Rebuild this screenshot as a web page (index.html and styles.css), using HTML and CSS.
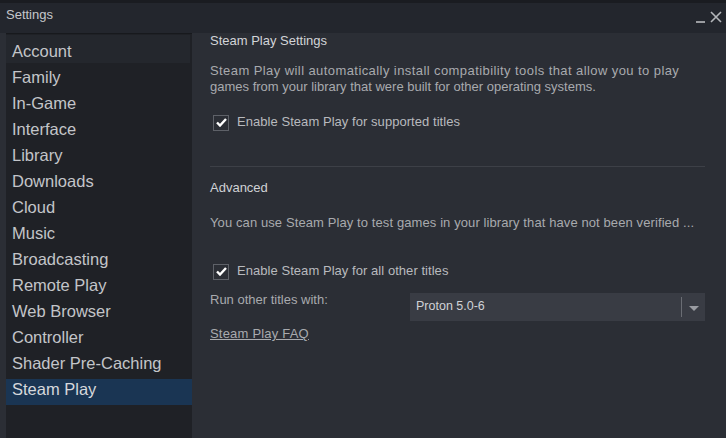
FILE: index.html
```html
<!DOCTYPE html>
<html>
<head>
<meta charset="utf-8">
<link rel="stylesheet" href="styles.css">
</head>
<body>
<div class="window">
  <div class="topstrip"></div>
  <div class="titlebar">
    <span class="title">Settings</span>
    <div class="controls">
      <span class="min"></span>
      <svg class="close" width="12" height="12" viewBox="0 0 12 12"><path d="M1 1 L11 11 M11 1 L1 11" stroke="#b4b6ba" stroke-width="1.6" fill="none"/></svg>
    </div>
  </div>
  <div class="main">
    <nav class="sidebar">
      <div class="item hover">Account</div>
      <div class="item">Family</div>
      <div class="item">In-Game</div>
      <div class="item">Interface</div>
      <div class="item">Library</div>
      <div class="item">Downloads</div>
      <div class="item">Cloud</div>
      <div class="item">Music</div>
      <div class="item">Broadcasting</div>
      <div class="item">Remote Play</div>
      <div class="item">Web Browser</div>
      <div class="item">Controller</div>
      <div class="item">Shader Pre-Caching</div>
      <div class="item active">Steam Play</div>
    </nav>
    <section class="content">
      <h2 class="heading">Steam Play Settings</h2>
      <p class="desc"><span class="wide">Steam Play will automatically install compatibility tools that allow you to play</span><br>games from your library that were built for other operating systems.</p>
      <label class="check first"><span class="box"><svg width="11" height="9" viewBox="0 0 11 9"><path d="M1 4.5 L4 7.5 L10 1" stroke="#ffffff" stroke-width="2.4" fill="none"/></svg></span>Enable Steam Play for supported titles</label>
      <div class="sep"></div>
      <h2 class="heading adv">Advanced</h2>
      <p class="desc one">You can use Steam Play to test games in your library that have not been verified ...</p>
      <label class="check second"><span class="box"><svg width="11" height="9" viewBox="0 0 11 9"><path d="M1 4.5 L4 7.5 L10 1" stroke="#ffffff" stroke-width="2.4" fill="none"/></svg></span>Enable Steam Play for all other titles</label>
      <div class="runrow">
        <span class="runlabel">Run other titles with:</span>
        <div class="select">
          <span class="value">Proton 5.0-6</span>
          <span class="divider"></span>
          <span class="arrow"></span>
        </div>
      </div>
      <a class="faq">Steam Play FAQ</a>
    </section>
  </div>
</div>
</body>
</html>
```
FILE: styles.css
```css
* { box-sizing: border-box; }
html, body { margin: 0; padding: 0; }
body {
  width: 726px;
  height: 438px;
  overflow: hidden;
  background: #2b2e35;
  font-family: "Liberation Sans", Arial, sans-serif;
}
.window {
  display: flex;
  flex-direction: column;
  height: 438px;
}
.topstrip {
  height: 3px;
  background: #1a1c21;
}
.titlebar {
  height: 30px;
  background: #23262d;
  display: flex;
  align-items: center;
  justify-content: space-between;
  padding: 0 4px 0 6px;
}
.title {
  color: #c5c7cb;
  font-size: 13px;
  margin-top: -8px;
}
.controls {
  display: flex;
  align-items: center;
  gap: 5px;
  margin-top: -2px;
}
.min {
  width: 9px;
  height: 2px;
  background: #9a9ca0;
  margin-top: 9px;
}
.main {
  flex: 1;
  display: flex;
  min-height: 0;
}
.sidebar {
  width: 186px;
  margin-left: 6px;
  background: #1f2126;
  padding-top: 7px;
  border-top: 1px solid #17191d;
}
.item {
  height: 26px;
  line-height: 20px;
  padding-left: 6px;
  font-size: 16.5px;
  color: #c3c5c9;
  margin-right: 2px;
}
.item.hover {
  background: #24272d;
  height: 28px;
  margin-top: -6px;
  padding-top: 6px;
  margin-bottom: 4px;
}
.item.active {
  background: #1a3553;
  color: #d6d8dc;
  margin-right: 0;
}
.content {
  flex: 1;
  padding: 0 21px 0 18px;
}
.heading {
  margin: 0;
  font-weight: normal;
  font-size: 13px;
  line-height: 16px;
  color: #d2d4d8;
}
.desc {
  margin: 14px 0 0;
  font-size: 13px;
  line-height: 16px;
  color: #a8aaae;
}
.wide { letter-spacing: 0.42px; }
.desc.one { margin-top: 19px; letter-spacing: 0.1px; }
.check {
  display: flex;
  align-items: center;
  font-size: 13px;
  color: #b8babe;
  height: 20px;
  letter-spacing: 0.05px;
}
.check.first { margin-top: 16px; }
.check.second { margin-top: 29px; }
.box {
  width: 16px;
  height: 16px;
  border: 1px solid #5e6168;
  margin: 3px 8px 0 3px;
  display: flex;
  align-items: center;
  justify-content: center;
}
.sep {
  height: 1px;
  background: #3d4047;
  margin-top: 35px;
}
.heading.adv {
  margin-top: 13px;
  color: #d0d2d6;
}
.runrow {
  display: flex;
  align-items: flex-start;
  margin-top: 13px;
}
.runlabel {
  width: 200px;
  font-size: 13px;
  color: #a8aaae;
  line-height: 16px;
  margin-top: -1px;
}
.select {
  flex: 1;
  height: 28px;
  background: #393c44;
  display: flex;
  align-items: center;
}
.value {
  flex: 1;
  padding-left: 6px;
  font-size: 12.5px;
  color: #d0d2d6;
  margin-top: -3px;
}
.divider {
  width: 1px;
  height: 20px;
  background: #6a6d74;
  margin-right: 7px;
}
.arrow {
  width: 0;
  height: 0;
  border-left: 5px solid transparent;
  border-right: 5px solid transparent;
  border-top: 5px solid #9a9ca2;
  margin-right: 6px;
  margin-top: 2px;
}
.faq {
  display: block;
  margin-top: 5px;
  font-size: 13px;
  line-height: 16px;
  color: #a8aaae;
  text-decoration: underline;
  letter-spacing: 0.2px;
}
```
